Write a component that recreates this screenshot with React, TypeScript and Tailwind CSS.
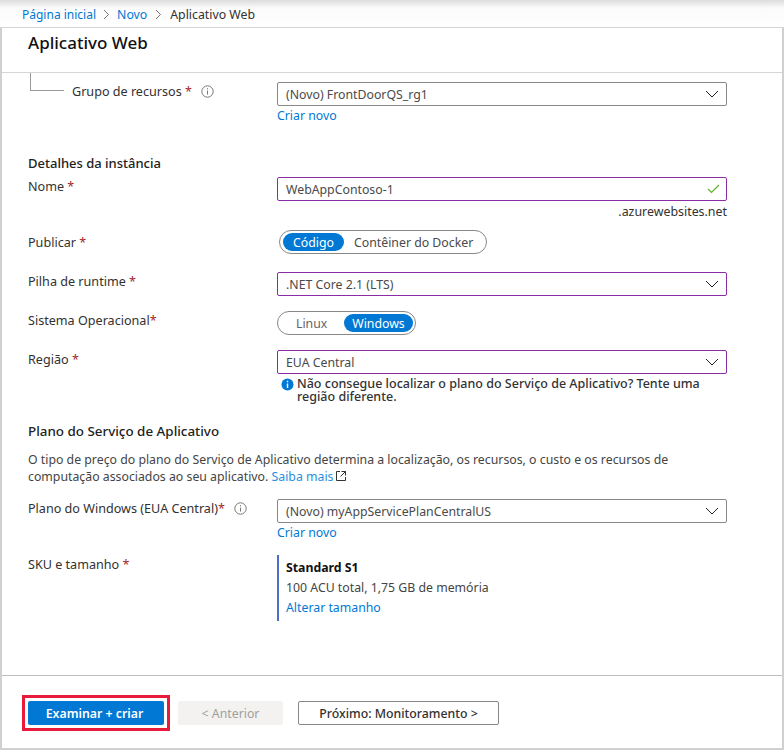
import React from "react";

const Chevron = () => (
  <svg width="14" height="8" viewBox="0 0 14 8" fill="none" className="shrink-0">
    <path d="M1 1l6 6 6-6" stroke="#222" strokeWidth="1" />
  </svg>
);

const Info = () => (
  <svg width="13" height="13" viewBox="0 0 13 13" fill="none" className="shrink-0">
    <circle cx="6.5" cy="6.5" r="5.7" stroke="#777" strokeWidth="1" />
    <path d="M6.5 5.6v4" stroke="#777" strokeWidth="1" />
    <path d="M6.5 3.2v1.2" stroke="#777" strokeWidth="1" />
  </svg>
);

const Req = () => <span className="text-[#a4262c]">*</span>;

function Select({ text, purple }: { text: string; purple?: boolean }) {
  return (
    <div
      className={
        "w-[450px] h-6 flex items-center justify-between pl-2 pr-[7px] rounded-[2px] border text-[#4a4a4a] " +
        (purple ? "border-[#8a2da5]" : "border-[#8a8886]")
      }
    >
      <span>{text}</span>
      <Chevron />
    </div>
  );
}

function Row({ label, h, mt, children }: { label: React.ReactNode; h: string; mt: string; children: React.ReactNode }) {
  return (
    <div className={"flex items-start " + h + " " + mt}>
      <div className="w-[249px] shrink-0 flex items-center h-5 text-[12.6px] text-[#323130]">{label}</div>
      <div>{children}</div>
    </div>
  );
}

const Link = ({ children }: { children: React.ReactNode }) => <span className="text-[#0078d4]">{children}</span>;

export default function App() {
  return (
    <div className="w-[784px] h-[750px] overflow-hidden bg-white flex flex-col text-[12.3px] leading-[17px] text-[#323130] font-['Noto_Sans','Open_Sans',sans-serif]">
      <div className="h-7 shrink-0 flex items-center pl-[22px] pt-px gap-[7px] border-b border-[#d4d4d4] bg-gradient-to-b from-[#dcdcdc] via-[#fbfbfb] via-30% to-white">
        <span className="text-[12px] text-[#0078d4]">Página inicial</span>
        <svg width="7" height="11" viewBox="0 0 7 11" fill="none"><path d="M1 1l4.500 4.500L1 10" stroke="#777" /></svg>
        <Link>Novo</Link>
        <svg width="7" height="11" viewBox="0 0 7 11" fill="none" className="ml-[1px] mr-[1px]"><path d="M1 1l4.500 4.500L1 10" stroke="#777" /></svg>
        <span>Aplicativo Web</span>
      </div>
      <div className="flex-1 min-h-0 flex flex-col border-l-2 border-r-2 border-b-2 border-[#d0d0d0]">
        <div className="h-[45px] shrink-0 border-b border-[#d6d6d6] pl-[26px] pt-[4px] text-[17px] leading-[22px] font-medium text-[#111]">
          Aplicativo Web
        </div>
        <div className="h-[603px] shrink-0 border-b border-[#bdbdbd] pl-[26px] relative">
          <div className="absolute left-[28px] top-0 w-[34px] h-[18px] border-l border-b border-[#999]" />
          <Row
            mt="mt-[9px]"
            h="h-[65px]"
            label={
              <span className="flex items-center pl-[44px] -mt-[1px]">
                Grupo de recursos&nbsp;<Req />
                <span className="ml-[9px]"><Info /></span>
              </span>
            }
          >
            <Select text="(Novo) FrontDoorQS_rg1" />
            <div className="mt-[1px]"><Link>Criar novo</Link></div>
          </Row>
          <div className="font-medium text-[#222] text-[13px] h-[17px] mt-[8px]">Detalhes da instância</div>
          <Row mt="mt-[5px]" h="h-[53px]" label={<span className="-mt-[2px]">Nome&nbsp;<Req /></span>}>
            <div className="w-[450px] h-6 flex items-center justify-between pl-2 pr-[6px] border border-[#8a2da5] rounded-[2px] text-[#4a4a4a]">
              <span>WebAppContoso-1</span>
              <svg width="13" height="10" viewBox="0 0 13 10" fill="none"><path d="M1 5l3.500 3.500L12 1" stroke="#5fb32e" strokeWidth="1.200" /></svg>
            </div>
            <div className="text-right mt-[2px] text-[12.400px]">.azurewebsites.net</div>
          </Row>
          <Row mt="mt-0" h="h-[42px]" label={<span className="mt-[4px]">Publicar&nbsp;<Req /></span>}>
            <div className="ml-[2px] w-[208px] h-6 rounded-full border border-[#8a8886] flex items-center pl-[3px]">
              <span className="h-[18px] w-[61px] rounded-full bg-[#0078d4] text-white flex items-center justify-center">Código</span>
              <span className="ml-[10px] text-[#4a4a4a]">Contêiner do Docker</span>
            </div>
          </Row>
          <Row mt="mt-0" h="h-[39px]" label={<span className="-mt-[1px]">Pilha de runtime&nbsp;<Req /></span>}>
            <Select purple text=".NET Core 2.1 (LTS)" />
          </Row>
          <Row mt="mt-0" h="h-[39px]" label={<span className="-mt-[2px]">Sistema Operacional<Req /></span>}>
            <div className="w-[139px] h-6 rounded-full border border-[#8a8886] flex items-center justify-between pl-[18px] pr-[2px]">
              <span className="text-[#666]">Linux</span>
              <span className="h-[18px] w-[69px] rounded-full bg-[#0078d4] text-white flex items-center justify-center">Windows</span>
            </div>
          </Row>
          <Row mt="mt-0" h="h-[68px]" label={<span className="-mt-[2px]">Região&nbsp;<Req /></span>}>
            <Select purple text="EUA Central" />
            <div className="flex items-start mt-[3px] pl-[4px] w-[430px] leading-[13px]">
              <svg width="13" height="13" viewBox="0 0 13 13" className="shrink-0 mt-[1px] mr-[3px]">
                <circle cx="6.500" cy="6.500" r="6" fill="#0078d4" />
                <path d="M6.500 5.500v4.500M6.500 2.800v1.400" stroke="#fff" strokeWidth="1.400" />
              </svg>
              <span className="font-medium text-[12.5px] text-[#333]">Não consegue localizar o plano do Serviço de Aplicativo? Tente uma região diferente.</span>
            </div>
          </Row>
          <div className="font-medium text-[#222] text-[13.4px] h-[17px] mt-[5px]">Plano do Serviço de Aplicativo</div>
          <p className="mt-[11px] h-[34px] w-[650px] text-[#444]">
            O tipo de preço do plano do Serviço de Aplicativo determina a localização, os recursos, o custo e os recursos de computação associados ao seu aplicativo.{" "}
            <span className="text-[#2a8fe0]">Saiba mais</span>
            <svg width="10" height="10" viewBox="0 0 10 10" fill="none" className="inline ml-[3px] mb-[4px]">
              <path d="M4 .500H.500v9h9V6M5.500.500h4v4M9.500.500L4.500 5.500" stroke="#333" />
            </svg>
          </p>
          <Row
            mt="mt-[14px]"
            h="h-[56px]"
            label={
              <span className="flex items-center -mt-[2px]">
                Plano do Windows (EUA Central)<Req />
                <span className="ml-[9px]"><Info /></span>
              </span>
            }
          >
            <Select text="(Novo) myAppServicePlanCentralUS" />
            <div className="mt-[1px]"><Link>Criar novo</Link></div>
          </Row>
          <Row mt="mt-0" h="h-[66px]" label={<span className="-mt-[2px]">SKU e tamanho&nbsp;<Req /></span>}>
            <div className="h-[66px] border-l-2 border-[#4a6fc4] pl-[7px] pt-[4px]">
              <div className="font-bold text-[#111]">Standard S1</div>
              <div className="mt-[3px] text-[#444]">100 ACU total, 1,75 GB de memória</div>
              <div className="mt-[3px]"><Link>Alterar tamanho</Link></div>
            </div>
          </Row>
        </div>
        <div className="flex-1 flex items-center pl-5 pt-[1px]">
          <div className="border-[3px] border-[#e81c3a] p-[3px] mr-[8px]">
            <div className="w-[136px] h-6 rounded-[2px] bg-[#0078d4] text-white font-semibold flex items-center justify-center pt-[1px] pr-[3px]">Examinar + criar</div>
          </div>
          <div className="w-[105px] h-6 rounded-[2px] bg-[#f3f2f1] text-[#a19f9d] flex items-center justify-center pt-[1px]">&lt; Anterior</div>
          <div className="ml-[15px] w-[201px] h-6 rounded-[2px] border border-[#8a8886] text-[#323130] font-medium flex items-center justify-center pt-[1px]">Próximo: Monitoramento &gt;</div>
        </div>
      </div>
    </div>
  );
}
